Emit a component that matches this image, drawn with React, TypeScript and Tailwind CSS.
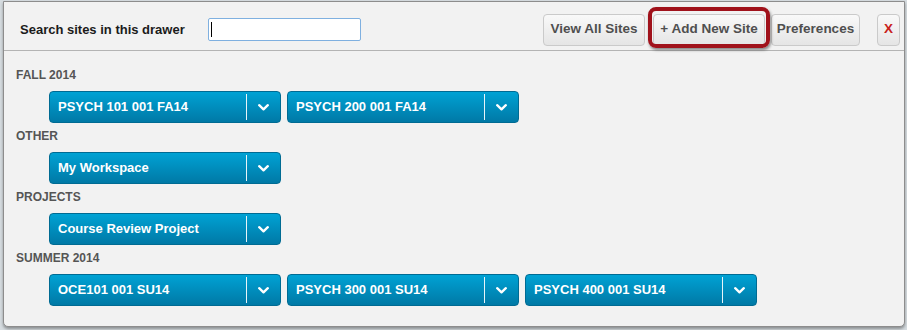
import React from 'react'

const groups = [
  { term: 'FALL 2014', sites: ['PSYCH 101 001 FA14', 'PSYCH 200 001 FA14'] },
  { term: 'OTHER', sites: ['My Workspace'] },
  { term: 'PROJECTS', sites: ['Course Review Project'] },
  { term: 'SUMMER 2014', sites: ['OCE101 001 SU14', 'PSYCH 300 001 SU14', 'PSYCH 400 001 SU14'] },
]

function Chevron() {
  return (
    <svg width="11" height="7" viewBox="0 0 11 7" fill="none">
      <polyline points="1.2,1.2 5.5,5.3 9.8,1.2" stroke="#fff" strokeWidth="2.3" strokeLinecap="round" strokeLinejoin="round" />
    </svg>
  )
}

function SiteButton({ name }: { name: string }) {
  return (
    <div className="flex h-[32px] w-[232px] items-stretch rounded-[4px] border border-[#006b93] bg-gradient-to-b from-[#00a2d4] to-[#0079a6] text-white">
      <div className="flex w-[196px] items-center pl-[8px] text-[13px] font-bold">{name}</div>
      <div className="my-[2px] w-px bg-[#e8f4f9]" />
      <div className="flex flex-1 items-center justify-center">
        <Chevron />
      </div>
    </div>
  )
}

function HeaderButton({ label, width, red }: { label: string; width: string; red?: boolean }) {
  return (
    <button
      className={`flex h-[32px] ${width} items-center justify-center rounded-[4px] border border-[#cacaca] bg-gradient-to-b from-[#f9f9f9] to-[#e5e5e5] text-[13.5px] font-bold ${
        red ? 'text-[#c8211b]' : 'text-[#4f4f4f]'
      }`}
    >
      {label}
    </button>
  )
}

export default function App() {
  return (
    <div
      className="h-[330px] w-[907px] bg-[#d6dce0] pl-[3px] pt-[1px]"
      style={{ fontFamily: '"Liberation Sans", Arial, sans-serif' }}
    >
      <div className="relative h-[326px] w-[902px] rounded-b-[5px] border border-[#8d8d8d] bg-[#f2f2f2] shadow-[0_2px_3px_rgba(0,0,0,0.35)]">
        {/* Header */}
        <div className="flex h-[49px] items-center border-b border-[#b4b4b4] pl-[16px] pr-[4px] pt-[7px]">
          <span className="text-[13px] font-bold text-[#1b1b1b]">Search sites in this drawer</span>
          <div className="relative ml-[23px] h-[23px] w-[153px] rounded-[2px] border border-[#7fb0e0] bg-white">
            <span className="absolute left-[2px] top-[3px] h-[15px] w-px bg-black" />
          </div>
          <div className="ml-auto flex items-center">
            <HeaderButton label="View All Sites" width="w-[102px]" />
            <div className="ml-[8px]">
              <HeaderButton label="+ Add New Site" width="w-[112px]" />
            </div>
            <div className="ml-[6px]">
              <HeaderButton label="Preferences" width="w-[89px]" />
            </div>
            <div className="ml-[17px]">
              <HeaderButton label="X" width="w-[23px]" red />
            </div>
          </div>
        </div>

        {/* Annotation highlight */}
        <div className="pointer-events-none absolute left-[644px] top-[5px] h-[41px] w-[122px] rounded-[8px] border-[4px] border-[#a0121b] shadow-[1px_2px_3px_rgba(0,0,0,0.45)]" />

        {/* Body */}
        <div className="px-[12px] pt-[16px]">
          {groups.map((g) => (
            <div key={g.term} className="mb-[5px]">
              <div className="h-[16px] text-[12px] font-bold leading-[16px] text-[#555]">{g.term}</div>
              <div className="ml-[33px] mt-[8px] flex gap-[6px]">
                {g.sites.map((s) => (
                  <SiteButton key={s} name={s} />
                ))}
              </div>
            </div>
          ))}
        </div>
      </div>
    </div>
  )
}
